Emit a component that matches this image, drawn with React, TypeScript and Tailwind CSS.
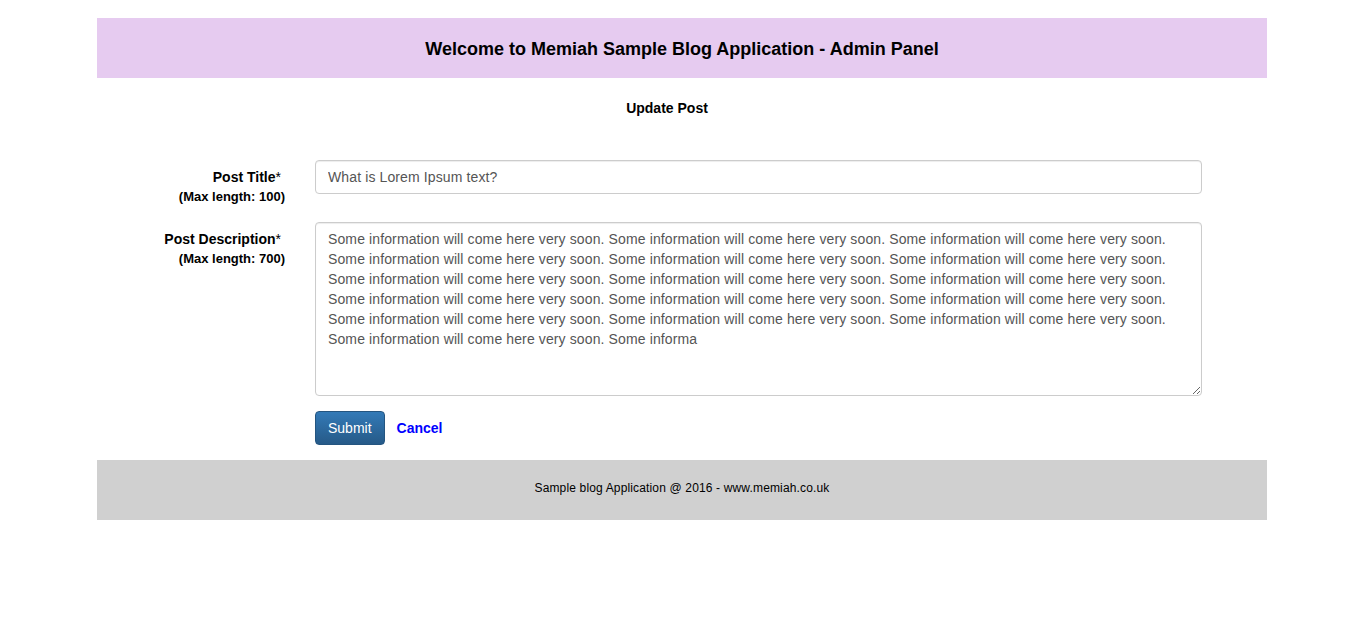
const sentence = "Some information will come here very soon. "

const description = sentence.repeat(16) + "Some informa"

export default function App() {
  return (
    <div className="min-h-screen bg-white font-['Liberation_Sans',Arial,sans-serif] text-[14px] leading-[20px] text-black">
      <div className="ml-[97px] w-[1170px] pt-[18px]">
        {/* header */}
        <div className="flex h-[60px] items-center justify-center bg-[#e6cbf0] pt-[2px]">
          <h1 className="text-[18px] font-bold">Welcome to Memiah Sample Blog Application - Admin Panel</h1>
        </div>

        <h2 className="pr-[30px] pt-[20px] text-center text-[14px] font-bold">Update Post</h2>

        {/* form */}
        <form className="mt-[42px]">
          <div className="mb-[15px] flex">
            <div className="w-[203px] pr-[15px] pt-[7px] text-right">
              <div className="font-bold">
                Post Title<span className="mr-[4px] font-normal">*</span>
              </div>
              <div className="text-[13px] font-bold">(Max length: 100)</div>
            </div>
            <div className="w-[902px] pl-[15px]">
              <input
                defaultValue="What is Lorem Ipsum text?"
                className="h-[34px] w-full rounded-[4px] border border-[#ccc] px-[12px] py-[6px] text-[14px] tracking-[0.12px] text-[#555] shadow-[inset_0_1px_1px_rgba(0,0,0,0.075)] outline-none"
              />
            </div>
          </div>

          <div className="mb-[15px] flex">
            <div className="w-[203px] pr-[15px] pt-[7px] text-right">
              <div className="font-bold">
                Post Description<span className="mr-[4px] font-normal">*</span>
              </div>
              <div className="text-[13px] font-bold">(Max length: 700)</div>
            </div>
            <div className="w-[902px] pl-[15px]">
              <textarea
                rows={8}
                defaultValue={description}
                className="block h-[174px] w-full resize-y rounded-[4px] border border-[#ccc] px-[12px] py-[6px] text-[14px] leading-[20px] tracking-[0.12px] text-[#555] shadow-[inset_0_1px_1px_rgba(0,0,0,0.075)] outline-none"
              />
            </div>
          </div>

          <div className="mb-[15px] flex">
            <div className="w-[203px]" />
            <div className="flex items-center gap-[12px] pl-[15px]">
              <button
                type="button"
                className="h-[34px] rounded-[4px] border border-[#245580] bg-gradient-to-b from-[#337ab7] to-[#265a88] px-[12px] text-[14px] text-white"
              >
                Submit
              </button>
              <a href="#" className="font-bold text-[#0000ff]">
                Cancel
              </a>
            </div>
          </div>
        </form>

        {/* footer */}
        <div className="flex h-[60px] items-center justify-center bg-[#d0d0d0] pb-[4px] text-[12px] tracking-[0.15px]">
          Sample blog Application @ 2016 - www.memiah.co.uk
        </div>
      </div>
    </div>
  )
}
